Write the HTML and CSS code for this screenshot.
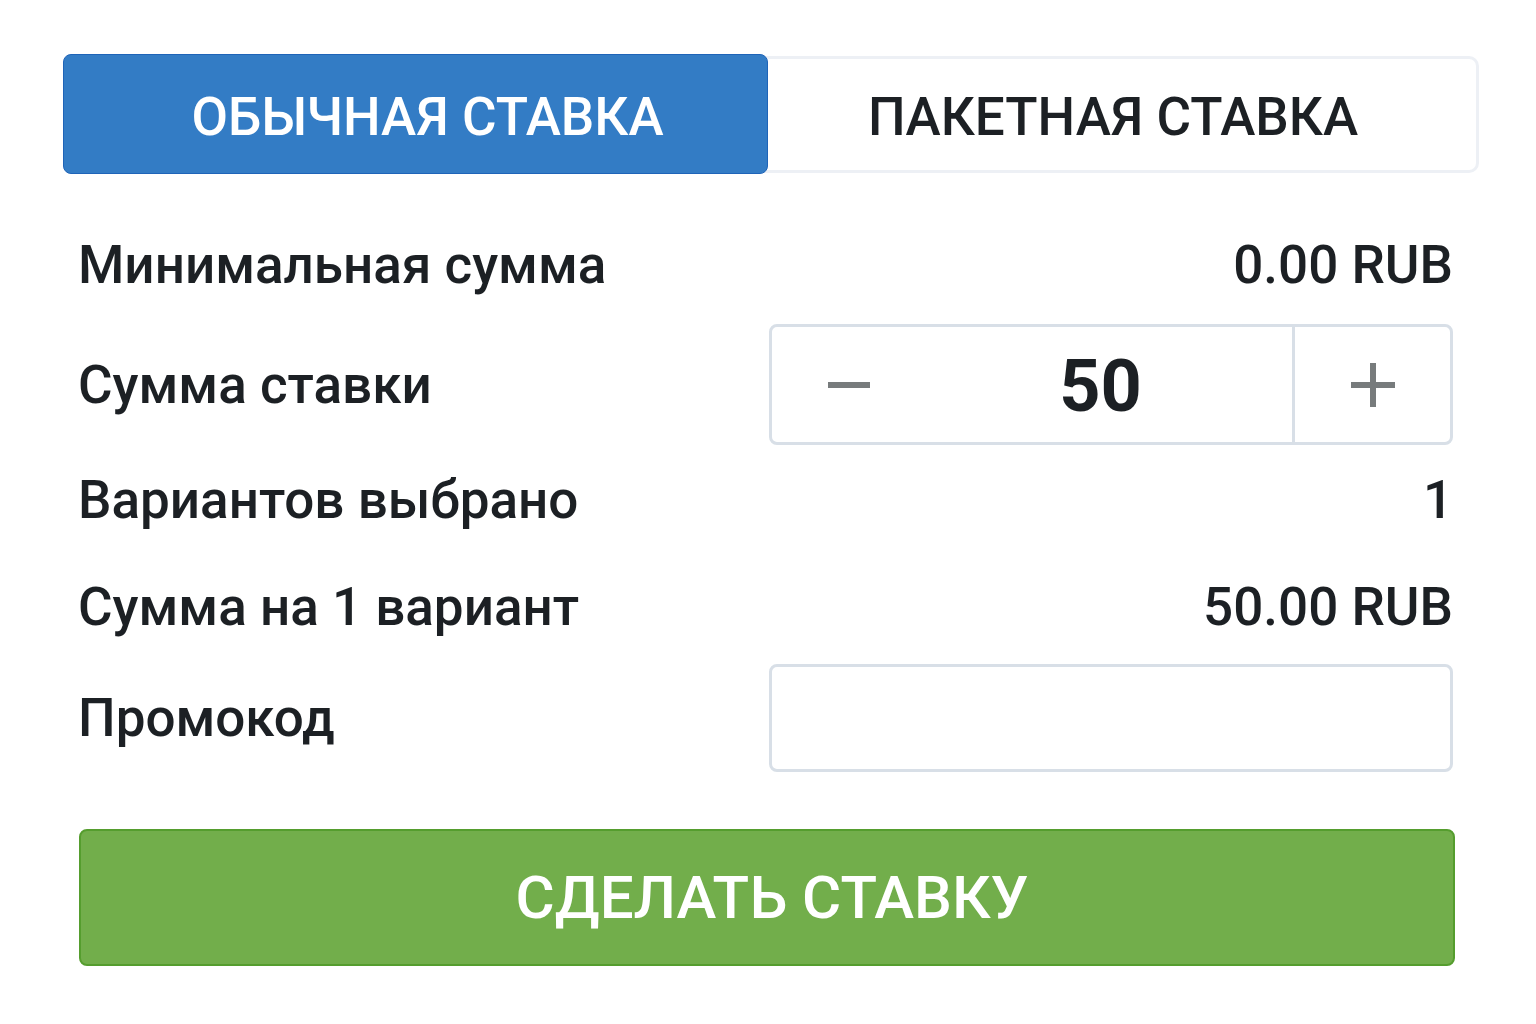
FILE: index.html
```html
<!DOCTYPE html>
<html lang="ru">
<head>
<meta charset="utf-8">
<title>Ставка</title>
<link rel="stylesheet" href="styles.css">
</head>
<body>
<div class="panel">
  <div class="tabs">
    <div class="tab tab-active">ОБЫЧНАЯ СТАВКА</div>
    <div class="tab tab-idle">ПАКЕТНАЯ СТАВКА</div>
  </div>
  <div class="rows">
    <div class="row row-1">
      <span class="label">Минимальная сумма</span>
      <span class="value">0.00 RUB</span>
    </div>
    <div class="row row-2">
      <span class="label">Сумма ставки</span>
      <div class="stepper">
        <div class="step-btn step-minus"><span class="bar-h"></span></div>
        <div class="step-value">50</div>
        <div class="step-btn step-plus"><span class="bar-h"></span><span class="bar-v"></span></div>
      </div>
    </div>
    <div class="row row-3">
      <span class="label">Вариантов выбрано</span>
      <span class="value">1</span>
    </div>
    <div class="row row-4">
      <span class="label">Сумма на 1 вариант</span>
      <span class="value">50.00 RUB</span>
    </div>
    <div class="row row-5">
      <span class="label">Промокод</span>
      <div class="promo"></div>
    </div>
  </div>
  <div class="submit">СДЕЛАТЬ СТАВКУ</div>
</div>
</body>
</html>
```

FILE: styles.css
```css
* { box-sizing: border-box; }
html, body { margin: 0; padding: 0; background: #ffffff; }
body {
  font-family: Roboto, "Noto Sans", "Liberation Sans", sans-serif;
  color: #1c2024;
}
.panel {
  width: 1416px;
  margin-left: 63px;
  padding-top: 54px;
}
.tabs {
  display: flex;
  align-items: center;
  height: 120px;
}
.tab {
  display: flex;
  align-items: center;
  justify-content: center;
  font-size: 53px;
  font-weight: 500;
  padding-top: 5px;
}
.tab-active {
  width: 705px;
  height: 120px;
  padding-left: 24px;
  background: #337cc5;
  border: 1px solid #1f64b8;
  border-radius: 8px;
  color: #ffffff;
  position: relative;
  z-index: 1;
}
.tab-idle {
  flex: 1;
  height: 117px;
  margin-left: -8px;
  padding-right: 10px;
  border: 3px solid #edf0f5;
  border-left: none;
  border-radius: 0 10px 10px 0;
  color: #1c2024;
}
.rows {
  padding: 0 26px 0 15px;
  margin-top: 61px;
}
.row {
  display: flex;
  align-items: center;
  justify-content: space-between;
}
.label, .value {
  font-size: 53px;
  font-weight: 500;
  line-height: 60px;
}
.row-1 { height: 60px; }
.row-2 { height: 121px; margin-top: 29px; }
.row-3 { height: 60px; margin-top: 25px; }
.row-4 { height: 60px; margin-top: 47px; }
.row-5 { height: 108px; margin-top: 27px; }
.stepper {
  width: 684px;
  height: 121px;
  border: 3px solid #d8dfe7;
  border-radius: 8px;
  display: flex;
}
.step-btn {
  position: relative;
  display: flex;
  align-items: center;
  justify-content: center;
}
.step-minus { width: 157px; padding-right: 4px; }
.step-value {
  flex: 1;
  display: flex;
  align-items: center;
  justify-content: center;
  font-size: 72px;
  font-weight: 700;
  padding-right: 20px;
  padding-top: 4px;
}
.step-plus {
  width: 158px;
  border-left: 3px solid #d8dfe7;
}
.bar-h {
  display: block;
  width: 42px;
  height: 6px;
  background: #777b7c;
}
.step-plus .bar-h { width: 44px; }
.bar-v {
  position: absolute;
  left: 50%;
  top: 50%;
  width: 6px;
  height: 44px;
  margin-left: -3px;
  margin-top: -22px;
  background: #777b7c;
}
.promo {
  width: 684px;
  height: 108px;
  border: 3px solid #d8dfe7;
  border-radius: 8px;
}
.submit {
  margin: 57px 24px 0 16px;
  height: 137px;
  padding-left: 10px;
  background: #72ae4b;
  border: 2px solid #559d2e;
  border-radius: 8px;
  display: flex;
  align-items: center;
  justify-content: center;
  color: #ffffff;
  font-size: 60px;
  font-weight: 500;
}
```
